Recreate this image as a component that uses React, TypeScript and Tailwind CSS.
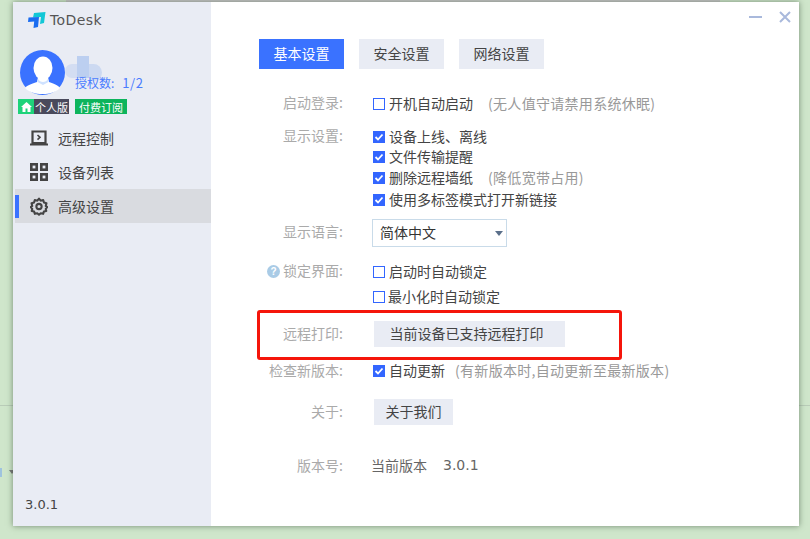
import React from 'react';

const CJK = { fontFamily: '"Noto Sans CJK SC", "Noto Sans", sans-serif' };

const Check: React.FC<{ on?: boolean }> = ({ on }) =>
  on ? (
    <span className="w-3 h-3 shrink-0 bg-[#3366ff] flex items-center justify-center">
      <svg width="10" height="10" viewBox="0 0 10 10" fill="none">
        <path d="M1.5 5 L4 7.5 L8.5 2.5" stroke="#fff" strokeWidth="1.8" />
      </svg>
    </span>
  ) : (
    <span className="w-3 h-3 shrink-0 border border-[#3366ff] bg-white" />
  );

const Option: React.FC<{ on?: boolean; text: string; note?: string; noteClass?: string; textClass?: string }> = ({ on, text, note, noteClass, textClass }) => (
  <div className="h-5 flex items-center whitespace-nowrap">
    <Check on={on} />
    <span className={`pb-[2px] text-[#444] ${textClass ?? 'ml-1'}`}>{text}</span>
    {note && <span className={`pb-[2px] text-[#999] tracking-[0.3px] ${noteClass}`}>{note}</span>}
  </div>
);

const Row: React.FC<{ label: string; className?: string; align?: string; up?: boolean; children: React.ReactNode }> = ({ label, className, align, up, children }) => (
  <div className={`flex ${align ?? 'items-center'} ${className ?? ''}`}>
    <div className={`w-[85px] h-5 shrink-0 flex items-center justify-end pr-px text-[#aaa] whitespace-nowrap ${up ? 'pb-1' : 'pb-[2px]'}`}>{label}:</div>
    <div className="ml-[29px]">{children}</div>
  </div>
);

const Tab: React.FC<{ active?: boolean; text: string }> = ({ active, text }) => (
  <div className={`w-[85px] h-[30px] flex items-center justify-center pb-[2px] ${active ? 'bg-[#3a72ff] text-white' : 'bg-[#e9ecf4] text-[#444]'}`}>{text}</div>
);

const NavItem: React.FC<{ icon: React.ReactNode; text: string; active?: boolean }> = ({ icon, text, active }) => (
  <div className={`ml-[2px] h-[34px] flex items-center ${active ? 'bg-[#d9dbe0]' : ''}`}>
    <div className={`w-1 h-[23px] ${active ? 'bg-[#3a72ff]' : ''}`} />
    <div className="ml-[11px] w-[18px] h-[18px] flex items-center justify-center">{icon}</div>
    <span className="ml-[10px] text-[#444]">{text}</span>
  </div>
);

const Logo = () => (
  <svg width="18" height="16" viewBox="0 0 18 16">
    <path d="M6 1 L17.5 0 L16 11 L12 12 L13 5 L5 5.5 Z" fill="#12c7d6" />
    <path d="M0.5 5.5 L11 5 L10 15 L5.5 16 L6.2 9.5 L0 10 Z" fill="#1a6cf0" />
  </svg>
);

const Avatar = () => (
  <svg width="45" height="45" viewBox="0 0 45 45">
    <circle cx="22.5" cy="22.5" r="22.5" fill="#3a72ff" />
    <ellipse cx="23" cy="18" rx="9.5" ry="11.5" fill="#fff" />
    <path d="M18 27 L28 27 L29 32 C35 34 39 36 40 38 C36 42 30 44 22.5 44 C15 44 9 42 5 38 C6 36 11 34 17 32 Z" fill="#fff" />
    <path d="M18 29 C20 33 26 33 28 29 L28.5 32 L23 35 L17.5 32 Z" fill="#cfe2ff" />
  </svg>
);

const App: React.FC = () => (
  <div className="relative w-[810px] h-[539px] overflow-hidden bg-[#cfe6cb] text-[14px] leading-5" style={CJK}>
    {/* desktop behind the window */}
    <div className="absolute left-0 right-0 top-[405px] h-px bg-[#b9ccb8]" />
    <div className="absolute left-0 top-[468px] w-[2px] h-[9px] bg-[#9fc3de]" />
    <div className="absolute left-[9px] top-[470px] w-0 h-0 border-x-[3px] border-x-transparent border-t-[4px] border-t-[#777]" />

    <div className="relative ml-[66px] w-[654px] h-[2px] bg-[#c9c9c9]" />
    <div className="relative ml-[13px] w-[786px] h-[524px] bg-white flex shadow-[0_0_6px_rgba(40,60,40,0.55)]">
      {/* sidebar */}
      <div className="relative w-[198px] h-full bg-[#e9ecf4] flex flex-col">
        <div className="mt-[10px] ml-[15px] flex items-center h-4">
          <Logo />
          <span className="ml-[4px] text-[14px] tracking-[0.4px] text-[#555]" style={{ fontFamily: '"DejaVu Sans", sans-serif' }}>ToDesk</span>
        </div>
        <div className="relative mt-[22px] ml-[7px] h-[50px] flex items-start">
          <Avatar />
          <div className="absolute left-[45px] top-[6px] w-[37px] h-[26px] flex">
            <div className="w-[12px] mt-2 h-[14px] bg-[#d3ddf2] rounded-l-full" />
            <div className="w-[12px] h-[22px] bg-[#bccff0]" />
            <div className="w-[13px] mt-2 h-[17px] bg-[#ccd9f1] rounded-r-full" />
          </div>
          <span className="absolute left-[55px] top-[23px] text-[12px] text-[#4a7cff] whitespace-nowrap">授权数:<span className="ml-[8px] text-[13px] tracking-[0.5px]">1/2</span></span>
        </div>
        <div className="mt-[-1px] ml-[5px] flex items-center h-[15px] text-[11px] text-white whitespace-nowrap">
          <div className="w-4 h-full bg-[#1ed37a] flex items-center justify-center">
            <svg width="11" height="10" viewBox="0 0 11 10"><path d="M5.5 0 L11 5 L9.5 5 L9.5 10 L6.5 10 L6.5 6.5 L4.5 6.5 L4.5 10 L1.5 10 L1.5 5 L0 5 Z" fill="#fff" /></svg>
          </div>
          <div className="w-[35px] h-full bg-[#4a4a5c] flex items-center justify-center">个人版</div>
          <div className="ml-[6px] w-[52px] h-full bg-[#0db45c] flex items-center justify-center">付费订阅</div>
        </div>
        <div className="mt-[7px] flex flex-col">
          <NavItem text="远程控制" icon={
            <svg width="18" height="16" viewBox="0 0 18 16" fill="none" stroke="#444">
              <path d="M2.5 1.5 H15.5 V13 H2.5 Z" strokeWidth="2.2" />
              <path d="M0 14.5 H18" strokeWidth="2" />
              <path d="M7.5 5 L10 7.3 L7.5 9.6" strokeWidth="1.6" />
            </svg>
          } />
          <NavItem text="设备列表" icon={
            <svg width="18" height="18" viewBox="0 0 18 18" fill="none" stroke="#444" strokeWidth="2.6">
              <rect x="1.3" y="1.3" width="5.4" height="5.4" /><rect x="11.3" y="1.3" width="5.4" height="5.4" />
              <rect x="1.3" y="11.3" width="5.4" height="5.4" /><rect x="11.3" y="11.3" width="5.4" height="5.4" />
            </svg>
          } />
          <NavItem active text="高级设置" icon={
            <svg width="19" height="19" viewBox="0 0 24 24" fill="none" stroke="#444" strokeWidth="2.8">
              <path d="M12 1.5 L14.2 4.2 L17.6 3.4 L18.6 6.7 L21.9 7.8 L21 11.2 L23 12.8 L21 15.2 L21.7 17.9 L18.5 18.8 L17.5 21.8 L14.3 21 L12 23 L9.7 21 L6.5 21.8 L5.5 18.8 L2.3 17.9 L3 15.2 L1 12.8 L3 11.2 L2.1 7.8 L5.4 6.7 L6.4 3.4 L9.8 4.2 Z" strokeLinejoin="round" />
              <circle cx="12" cy="12" r="3.5" />
            </svg>
          } />
        </div>
        <span className="absolute left-[12px] bottom-[11px] text-[13px] text-[#444]" style={{ fontFamily: '"DejaVu Sans", sans-serif' }}>3.0.1</span>
      </div>

      {/* main */}
      <div className="flex-1 pl-[48px] pt-[37px]">
        <div className="flex gap-[15px]">
          <Tab active text="基本设置" />
          <Tab text="安全设置" />
          <Tab text="网络设置" />
        </div>
        <Row up label="启动登录" className="mt-[25px]">
          <Option text="开机自动启动" note="(无人值守请禁用系统休眠)" noteClass="ml-[15px]" />
        </Row>
        <Row up label="显示设置" align="items-start" className="mt-[13px]">
          <Option on text="设备上线、离线" />
          <Option on text="文件传输提醒" />
          <div className="mt-px"><Option on text="删除远程墙纸" note="(降低宽带占用)" noteClass="ml-[15px]" /></div>
          <div className="mt-[2px]"><Option on text="使用多标签模式打开新链接" /></div>
        </Row>
        <Row up label="显示语言" className="mt-[9px]">
          <div className="-ml-px w-[135px] h-7 border border-[#c9dbe9] bg-white flex items-center justify-between pl-[7px] pr-[3px] pb-[2px] text-[#333]">
            <span>简体中文</span>
            <span className="mt-[2px] w-0 h-0 border-x-[4px] border-x-transparent border-t-[5px] border-t-[#5a6f8a]" />
          </div>
        </Row>
        <div className="relative">
          <Row up label="锁定界面" align="items-start" className="mt-[15px]">
            <Option text="启动时自动锁定" />
            <div className="mt-[5px]"><Option text="最小化时自动锁定" textClass="ml-[3px]" /></div>
          </Row>
          <span className="absolute left-[8px] top-[3px] w-[13px] h-[13px] rounded-full bg-[#a9cbe6] text-white text-[10px] leading-[13px] text-center font-bold" style={{ fontFamily: '"Liberation Sans", sans-serif' }}>?</span>
        </div>
        <Row label="远程打印" className="mt-[14px]">
          <div className="ml-px w-[191px] h-[26px] bg-[#e9ecf4] flex items-center justify-center pb-[2px] pr-[6px] text-[#444]">当前设备已支持远程打印</div>
        </Row>
        <Row label="检查新版本" className="mt-[14px]">
          <Option on text="自动更新" note="(有新版本时,自动更新至最新版本)" noteClass="ml-[10px]" />
        </Row>
        <Row label="关于" className="mt-[18px]">
          <div className="ml-px w-[79px] h-[26px] bg-[#e9ecf4] flex items-center justify-center pb-[2px] text-[#444]">关于我们</div>
        </Row>
        <Row label="版本号" className="mt-[30px]">
          <div className="-ml-[2px] flex items-center pb-[2px] text-[#666] whitespace-nowrap">
            <span>当前版本</span>
            <span className="ml-4" style={{ fontFamily: '"DejaVu Sans", sans-serif' }}>3.0.1</span>
          </div>
        </Row>
      </div>

      {/* window buttons */}
      <div className="absolute right-[8px] top-[9px] flex items-center gap-[17px]">
        <span className="w-[13px] h-[2px] bg-[#a9b9dc]" />
        <svg width="12" height="12" viewBox="0 0 12 12" stroke="#a9b9dc" strokeWidth="2"><path d="M1 1 L11 11 M11 1 L1 11" /></svg>
      </div>

      {/* annotation */}
      <div className="absolute left-[244px] top-[308px] w-[365px] h-[50px] border-[3px] border-[#f5150b] rounded-[3px] pointer-events-none" />
    </div>
  </div>
);

export default App;
